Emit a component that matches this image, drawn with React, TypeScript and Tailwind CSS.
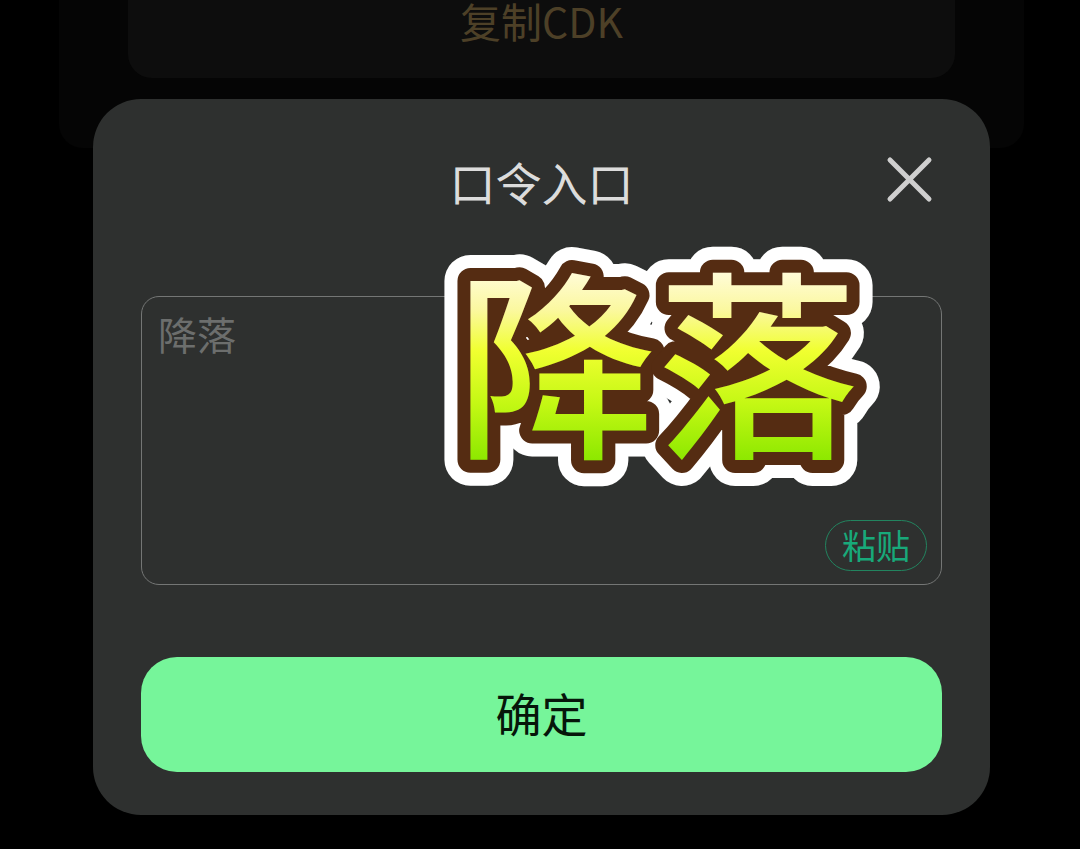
import React, { useState } from "react";

const Sticker = () => {
  return (
    <svg
      viewBox="0 0 438 240"
      role="img"
      aria-label="降落"
      className="absolute -top-12 right-[61px] w-[438px] h-[240px] overflow-visible pointer-events-none font-['Noto_Sans_CJK_SC',sans-serif] font-medium text-[201px]"
    >
      <defs>
        <linearGradient
          id="lime"
          gradientUnits="userSpaceOnUse"
          x1="0"
          y1="24"
          x2="0"
          y2="212"
        >
          <stop offset="0" stopColor="#fffcd8" />
          <stop offset="0.2" stopColor="#fbf8a0" />
          <stop offset="0.42" stopColor="#f0ff30" />
          <stop offset="0.7" stopColor="#c4f814" />
          <stop offset="1" stopColor="#8de800" />
        </linearGradient>
      </defs>
      {/* white outline */}
      <text
        x="13"
        y="195"
        fill="#fff"
        stroke="#fff"
        strokeWidth="52"
        strokeLinejoin="round"
        aria-hidden="true"
      >
        降落
      </text>
      {/* brown outline and fill */}
      <text
        x="13"
        y="195"
        fill="url(#lime)"
        stroke="#552c12"
        strokeWidth="26"
        strokeLinejoin="round"
        paintOrder="stroke"
      >
        降落
      </text>
    </svg>
  );
};

const CodeDialog = () => {
  const [code, setCode] = useState("");

  const paste = async () => {
    setCode(await navigator.clipboard.readText());
  };

  return (
    <div
      role="dialog"
      aria-labelledby="dialog-title"
      className="bg-[#2e302f] rounded-[48px] px-12 pt-[52px] pb-[43px]"
    >
      {/* Header */}
      <div className="grid grid-cols-[1fr_auto_1fr] items-start h-16">
        <h1
          id="dialog-title"
          className="col-start-2 text-[46px] leading-[60px] text-[#dcdcdc]"
        >
          口令入口
        </h1>
        <button
          type="button"
          aria-label="关闭"
          className="justify-self-end w-16 h-16 cursor-pointer"
        >
          <svg
            viewBox="0 0 64 64"
            className="w-16 h-16"
            stroke="#cfcfcf"
            strokeWidth="5"
            strokeLinecap="round"
          >
            <path d="M12 9L51 48M51 9L12 48" />
          </svg>
        </button>
      </div>

      {/* Code input */}
      <div className="relative mt-[81px]">
        <textarea
          aria-label="口令"
          placeholder="降落"
          value={code}
          onChange={(e) => setCode(e.target.value)}
          className="block w-full h-[289px] resize-none rounded-[18px] border border-[#747675] bg-transparent px-4 py-2 text-[39px] leading-[56px] text-[#dcdcdc] placeholder:text-[#6c6e6d] outline-none"
        />
        <button
          type="button"
          onClick={paste}
          className="absolute right-[15px] bottom-[14px] w-[102px] h-[51px] flex items-center justify-center rounded-full border border-[#22845f] pb-0.5 text-[34px] leading-none text-[#18a97a] cursor-pointer"
        >
          粘贴
        </button>
        <Sticker />
      </div>

      <button
        type="button"
        className="mt-[72px] w-full h-[115px] rounded-[36px] bg-[#76f59a] pb-1.5 text-[46px] leading-[60px] text-[#06160a] cursor-pointer"
      >
        确定
      </button>
    </div>
  );
};

const App = () => {
  return (
    <div className="relative min-h-screen bg-black font-['Noto_Sans_CJK_SC',sans-serif]">
      {/* Dimmed page under the dialog */}
      <div className="pl-[59px] pr-[56px]">
        <div className="rounded-b-[24px] bg-[#050505] px-[69px] pb-[70px]">
          <button
            type="button"
            className="flex justify-center w-full h-[78px] rounded-b-[24px] bg-[#0d0d0d] text-[41px] leading-[40px] text-[#4d4027]"
          >
            复制CDK
          </button>
        </div>
      </div>

      <div className="absolute inset-0 pt-[99px] pl-[93px] pr-[90px]">
        <CodeDialog />
      </div>
    </div>
  );
};

export default App;
